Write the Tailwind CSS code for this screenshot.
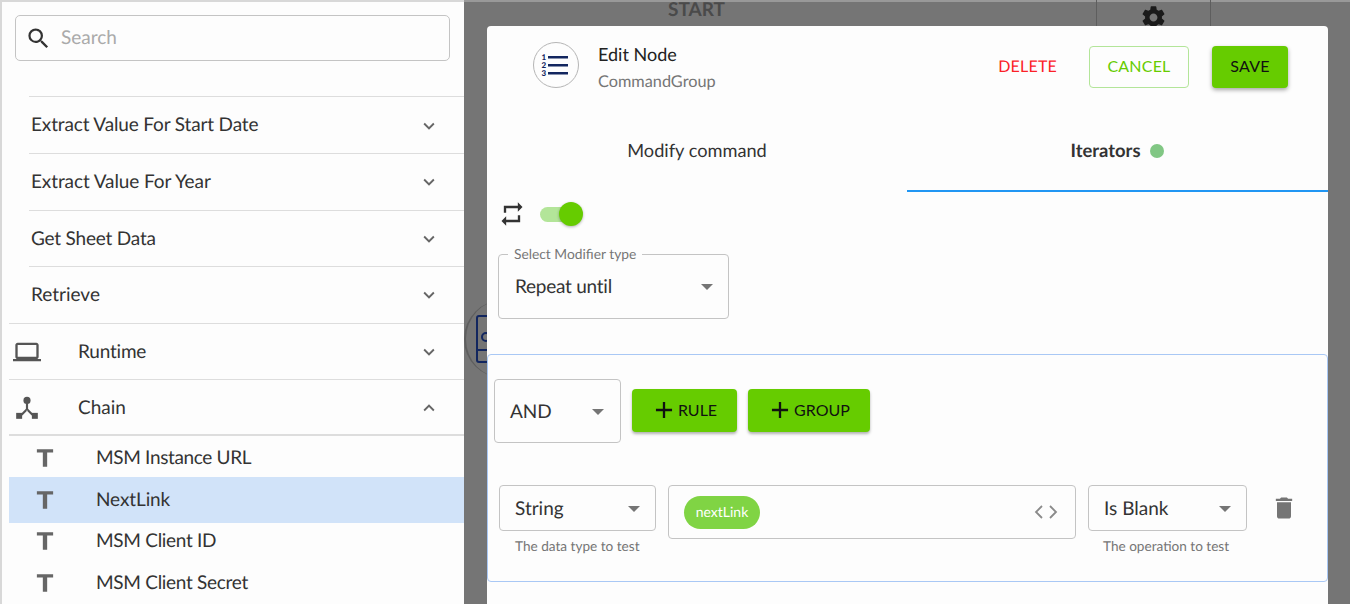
<!DOCTYPE html>
<html lang="en">
<head>
    <meta charset="UTF-8">
    <title>Edit Node</title>
    <script src="https://cdn.jsdelivr.net/npm/@tailwindcss/browser@4"></script>
</head>
<body class="bg-[#757575] font-['Lato',sans-serif] text-[#333] [text-rendering:geometricPrecision]">
    <div class="flex w-[1350px] h-[604px] overflow-hidden">
        <!-- Sidebar -->
        <aside class="w-[464px] h-full shrink-0 bg-[#fdfdfd] border-l-2 border-t-2 border-[#d8d8d8] pl-[7px] overflow-hidden">
            <div class="ml-[6px] mt-[13px] mr-[14px] h-[46px] border border-[#c4c4c4] rounded-[5px] flex items-center pl-[9px]">
                <svg class="w-[27px] h-[27px] text-[#333]" viewBox="0 0 24 24" fill="currentColor"><path d="M15.5 14h-.79l-.28-.27A6.47 6.47 0 0 0 16 9.5 6.5 6.5 0 1 0 9.5 16c1.61 0 3.09-.59 4.23-1.57l.27.28v.79l5 4.99L20.49 19l-4.99-5zm-6 0C7.01 14 5 11.99 5 9.5S7.01 5 9.5 5 14 7.01 14 9.5 11.99 14 9.5 14z"/></svg>
                <span class="ml-[9px] text-[19px] text-[#aaa]">Search</span>
            </div>

            <!-- Tree -->
            <div class="mt-[35px]">
                <div class="ml-[20px] h-[57px] pt-[1px] border-t border-[#ddd] flex items-center justify-between pl-[2px] pr-[24px] text-[19px]">
                    <span class="tracking-[-.15px]">Extract Value For Start Date</span>
                    <svg class="w-[22px] h-[22px] text-[#666]" viewBox="0 0 24 24" fill="currentColor"><path d="M7.41 8.59 12 13.17l4.59-4.58L18 10l-6 6-6-6z"/></svg>
                </div>
                <div class="ml-[20px] h-[56.5px] pt-[1px] border-t border-[#ddd] flex items-center justify-between pl-[2px] pr-[24px] text-[19px]">
                    <span class="tracking-[-.1px]">Extract Value For Year</span>
                    <svg class="w-[22px] h-[22px] text-[#666]" viewBox="0 0 24 24" fill="currentColor"><path d="M7.41 8.59 12 13.17l4.59-4.58L18 10l-6 6-6-6z"/></svg>
                </div>
                <div class="ml-[20px] h-[56.5px] pt-[1px] border-t border-[#ddd] flex items-center justify-between pl-[2px] pr-[24px] text-[19px]">
                    <span class="tracking-[-.2px]">Get Sheet Data</span>
                    <svg class="w-[22px] h-[22px] text-[#666]" viewBox="0 0 24 24" fill="currentColor"><path d="M7.41 8.59 12 13.17l4.59-4.58L18 10l-6 6-6-6z"/></svg>
                </div>
                <div class="ml-[20px] h-[56.5px] pt-[1px] border-t border-[#ddd] flex items-center justify-between pl-[2px] pr-[24px] text-[19px]">
                    <span>Retrieve</span>
                    <svg class="w-[22px] h-[22px] text-[#666]" viewBox="0 0 24 24" fill="currentColor"><path d="M7.41 8.59 12 13.17l4.59-4.58L18 10l-6 6-6-6z"/></svg>
                </div>
                <div class="h-[56.5px] pt-[2px] border-t border-[#ddd] flex items-center pr-[24px] text-[19px]">
                    <svg class="w-[28px] h-[28px] ml-[4px] text-[#555]" viewBox="0 0 24 24" fill="currentColor"><path d="M20 18c1.1 0 1.99-.9 1.99-2L22 6c0-1.1-.9-2-2-2H4c-1.1 0-2 .9-2 2v10c0 1.100.9 2 2 2H0v2h24v-2h-4zM4 6h16v10H4V6z"/></svg>
                    <span class="ml-[37px] flex-1 tracking-[-.2px]">Runtime</span>
                    <svg class="w-[22px] h-[22px] text-[#666]" viewBox="0 0 24 24" fill="currentColor"><path d="M7.41 8.59 12 13.17l4.59-4.58L18 10l-6 6-6-6z"/></svg>
                </div>
                <div class="h-[57px] pt-[2px] border-t border-[#ddd] border-b-2 flex items-center pr-[24px] text-[19px]">
                    <svg class="w-[26px] h-[26px] ml-[5px] text-[#555]" viewBox="0 0 24 24" fill="currentColor"><circle cx="12" cy="5" r="3.300"/><rect x="11" y="7" width="2" height="7"/><path d="m11.300 12.500 1.400 1.400-5 5-1.400-1.400zM12.700 12.500l-1.400 1.400 5 5 1.400-1.400z"/><rect x="2" y="16.500" width="5.500" height="5.500"/><rect x="16.500" y="16.500" width="5.500" height="5.500"/></svg>
                    <span class="ml-[38px] flex-1">Chain</span>
                    <svg class="w-[22px] h-[22px] text-[#666]" viewBox="0 0 24 24" fill="currentColor"><path d="M12 8l-6 6 1.410 1.410L12 10.830l4.590 4.580L18 14z"/></svg>
                </div>
                <div class="h-[41px] pt-[3px] flex items-center pl-[23px] text-[19px]">
                    <svg class="w-[26px] h-[26px] text-[#666]" viewBox="0 0 24 24" fill="currentColor"><path d="M4.500 4v3h5.500V20h4V7h5.500V4z"/></svg>
                    <span class="ml-[38px] tracking-[-.35px]">MSM Instance URL</span>
                </div>
                <div class="h-[46px] -mb-[3px] bg-[#d1e3f9] flex items-center pl-[23px] text-[19px]">
                    <svg class="w-[26px] h-[26px] text-[#666]" viewBox="0 0 24 24" fill="currentColor"><path d="M4.500 4v3h5.500V20h4V7h5.500V4z"/></svg>
                    <span class="ml-[38px] tracking-[-.1px]">NextLink</span>
                </div>
                <div class="h-[41.500px] flex items-center pl-[23px] text-[19px]">
                    <svg class="w-[26px] h-[26px] text-[#666]" viewBox="0 0 24 24" fill="currentColor"><path d="M4.500 4v3h5.500V20h4V7h5.500V4z"/></svg>
                    <span class="ml-[38px] tracking-[-.3px]">MSM Client ID</span>
                </div>
                <div class="h-[41.500px] pt-[2px] flex items-center pl-[23px] text-[19px]">
                    <svg class="w-[26px] h-[26px] text-[#666]" viewBox="0 0 24 24" fill="currentColor"><path d="M4.500 4v3h5.500V20h4V7h5.500V4z"/></svg>
                    <span class="ml-[38px] tracking-[-.3px]">MSM Client Secret</span>
                </div>
            </div>
        </aside>

        <!-- Canvas behind the modal -->
        <main class="relative flex-1 h-full border-t-2 border-[#999] bg-[#757575]">
            <span class="absolute left-[204px] -top-[2px] text-[19px] leading-[20px] font-bold text-[#4a4a4a]">START</span>
            <div class="absolute left-[632px] -top-[2px] w-[115px] h-[30px] border-x border-[#5e5e5e]"></div>
            <svg class="absolute left-[676px] top-[2px] w-[27px] h-[27px] text-[#1a1a1a]" viewBox="0 0 24 24" fill="currentColor"><path d="M19.430 12.980c.04-.32.07-.64.07-.98s-.03-.66-.07-.98l2.110-1.650c.19-.15.24-.42.12-.64l-2-3.460c-.12-.22-.39-.3-.61-.22l-2.490 1c-.52-.4-1.080-.73-1.690-.98l-.38-2.650A.488.488 0 0 0 14 2h-4c-.25 0-.46.18-.49.42l-.38 2.650c-.61.25-1.170.59-1.690.98l-2.490-1c-.23-.09-.49 0-.61.22l-2 3.460c-.13.22-.07.49.12.64l2.110 1.650c-.04.32-.07.65-.07.98s.03.66.07.98l-2.110 1.650c-.19.15-.24.42-.12.64l2 3.460c.12.22.39.3.61.22l2.490-1c.52.4 1.080.73 1.690.98l.38 2.650c.03.24.24.42.49.42h4c.25 0 .46-.18.49-.42l.38-2.650c.61-.25 1.170-.59 1.690-.98l2.490 1c.23.09.49 0 .61-.22l2-3.460c.12-.22.07-.49-.12-.64l-2.110-1.650zM12 15.500c-1.930 0-3.500-1.570-3.500-3.500s1.570-3.500 3.500-3.500 3.500 1.570 3.500 3.500-1.570 3.500-3.500 3.500z"/></svg>
            <div class="absolute left-0 top-[298px] w-[40px] h-[78px] rounded-l-full border-l-2 border-[#5e5e5e]"></div>
            <div class="absolute left-[12px] top-[313px] w-[14px] h-[48px] rounded-l-[3px] border-2 border-[#12265f]">
                <div class="mt-[15px] ml-[3px] w-[10px] h-[10px] rounded-full border-2 border-[#12265f]"></div>
                <div class="mt-[7px] h-[2px] bg-[#12265f]"></div>
            </div>

            <!-- Edit Node modal -->
            <section class="absolute left-[23px] top-[24px] w-[841px] h-[600px] bg-[#fdfdfd] rounded-t-[4px]">
                <header class="h-[82px] flex items-center pl-[46px] pr-[40px]">
                    <div class="-mt-[4px] w-[46px] h-[46px] rounded-full border-[1.5px] border-[#b5b5b5] flex items-center justify-center">
                        <svg class="w-[30px] h-[30px]" viewBox="0 0 30 30" fill="#12265f"><rect x="7" y="6" width="20" height="2.500"/><rect x="7" y="14" width="20" height="2.500"/><rect x="7" y="22" width="20" height="2.500"/><text x="0.500" y="10" font-size="8" font-weight="900" font-family="Lato">1</text><text x="0.500" y="18" font-size="8" font-weight="900" font-family="Lato">2</text><text x="0.500" y="26" font-size="8" font-weight="900" font-family="Lato">3</text></svg>
                    </div>
                    <div class="ml-[19px] flex-1">
                        <div class="text-[18px] leading-[26px] text-[#222]">Edit Node</div>
                        <div class="mt-[3px] text-[16.300px] leading-[24px] text-[#757575]">CommandGroup</div>
                    </div>
                    <span class="text-[16px] text-[#fb2127] tracking-[.2px]">DELETE</span>
                    <button class="ml-[32px] w-[100px] h-[42px] pb-[3px] rounded-[4px] border border-[#b3e599] text-[16px] text-[#66cc00] tracking-[.2px]">CANCEL</button>
                    <button class="ml-[23px] w-[76px] h-[42px] pb-[3px] rounded-[4px] bg-[#66cc00] text-[16px] text-[#111] tracking-[.2px] shadow-[0_2px_4px_rgba(0,0,0,.35)]">SAVE</button>
                </header>

                <!-- Tabs -->
                <nav class="h-[84px] flex">
                    <div class="w-[420px] h-full flex items-center justify-center pt-[2px] text-[18.200px]">Modify command</div>
                    <div class="flex-1 h-full flex items-center justify-center pt-[3px] text-[18.400px] font-bold border-b-2 border-[#2196f3]">
                        Iterators
                        <span class="ml-[10px] w-[14px] h-[14px] rounded-full bg-[#81c784]"></span>
                    </div>
                </nav>

                <div class="pt-[10px] pl-[11px] pr-0">
                    <div class="flex items-center h-[24px]">
                        <svg class="w-[28px] h-[28px] text-[#333]" viewBox="0 0 24 24" fill="currentColor"><path d="M7 7h10v3l4-4-4-4v3H5v6h2V7zm10 10H7v-3l-4 4 4 4v-3h12v-6h-2v4z"/></svg>
                        <!-- Switch -->
                        <div class="relative ml-[14px] w-[32px] h-[15px] rounded-full bg-[#b3e599]">
                            <span class="absolute -right-[11px] -top-[5px] w-[24px] h-[24px] rounded-full bg-[#66cc00] shadow-[0_1px_3px_rgba(0,0,0,.3)]"></span>
                        </div>
                    </div>

                    <fieldset class="relative mt-[28px] w-[231px] h-[65px] border border-[#c4c4c4] rounded-[4px] flex items-center justify-between pl-[16px] pr-[15px]">
                        <span class="absolute left-[9px] -top-[9px] bg-[#fdfdfd] px-[6px] text-[13.800px] leading-[16px] text-[#757575]">Select Modifier type</span>
                        <span class="text-[19px] tracking-[-.25px] pt-[2px]">Repeat until</span>
                        <span class="w-0 h-0 border-x-[6px] border-t-[6px] border-x-transparent border-t-[#757575]"></span>
                    </fieldset>
                </div>

                <!-- Query builder -->
                <div class="mt-[35px] h-[228px] border border-[#a9c8f5] rounded-[4px] pt-[24px] pl-[6px]">
                    <div class="flex items-center">
                        <div class="w-[127px] h-[64px] border border-[#c4c4c4] rounded-[4px] flex items-center justify-between pl-[15px] pr-[16px] pt-[2px] text-[19px]">
                            AND
                            <span class="w-0 h-0 border-x-[6px] border-t-[6px] border-x-transparent border-t-[#757575]"></span>
                        </div>
                        <button class="ml-[11px] -mt-[2px] w-[105px] h-[43px] rounded-[4px] bg-[#66cc00] text-[16px] text-[#111] flex items-center justify-center shadow-[0_2px_3px_rgba(0,0,0,.3)]">
                            <svg class="w-[24px] h-[24px] mr-[2px]" viewBox="0 0 24 24" fill="currentColor"><path d="M19 13h-6v6h-2v-6H5v-2h6V5h2v6h6z" transform="translate(12 12) scale(1.150) translate(-12 -12)"/></svg>
                            RULE
                        </button>
                        <button class="ml-[11px] -mt-[2px] w-[122px] h-[43px] rounded-[4px] bg-[#66cc00] text-[16px] text-[#111] flex items-center justify-center shadow-[0_2px_3px_rgba(0,0,0,.3)]">
                            <svg class="w-[24px] h-[24px] mr-[2px]" viewBox="0 0 24 24" fill="currentColor"><path d="M19 13h-6v6h-2v-6H5v-2h6V5h2v6h6z" transform="translate(12 12) scale(1.150) translate(-12 -12)"/></svg>
                            GROUP
                        </button>
                    </div>

                    <div class="mt-[42px] ml-[5px] flex items-start">
                        <div class="w-[157px]">
                            <div class="h-[46px] border border-[#c4c4c4] rounded-[4px] flex items-center justify-between pl-[15px] pr-[15px] pt-[2px] text-[19px]">
                                String
                                <span class="w-0 h-0 border-x-[6px] border-t-[6px] border-x-transparent border-t-[#757575]"></span>
                            </div>
                            <p class="mt-[7px] pl-[16px] text-[13.600px] leading-[17px] text-[#757575]">The data type to test</p>
                        </div>
                        <div class="ml-[12px] w-[408px] h-[54px] border border-[#c4c4c4] rounded-[4px] flex items-center justify-between pl-[15px] pr-[17px]">
                            <span class="w-[76px] h-[33px] pb-[1px] rounded-full bg-[#80d444] text-white text-[14px] flex items-center justify-center">nextLink</span>
                            <svg class="w-[24px] h-[14px] text-[#8a8a8a]" viewBox="0 0 24 14" fill="none" stroke="currentColor" stroke-width="1.800"><path d="M8 1 2 7l6 6M16 1l6 6-6 6"/></svg>
                        </div>
                        <div class="ml-[12px] w-[159px]">
                            <div class="h-[46px] border border-[#c4c4c4] rounded-[4px] flex items-center justify-between pl-[15px] pr-[15px] pt-[2px] text-[19px]">
                                Is Blank
                                <span class="w-0 h-0 border-x-[6px] border-t-[6px] border-x-transparent border-t-[#757575]"></span>
                            </div>
                            <p class="mt-[7px] pl-[15px] text-[13.600px] leading-[17px] text-[#757575]">The operation to test</p>
                        </div>
                        <svg class="ml-[23px] mt-[9px] w-[28px] h-[28px] text-[#757575]" viewBox="0 0 24 24" fill="currentColor"><path d="M6 19c0 1.100.9 2 2 2h8c1.100 0 2-.9 2-2V7H6v12zM19 4h-3.500l-1-1h-5l-1 1H5v2h14V4z"/></svg>
                    </div>
                </div>
            </section>
        </main>
    </div>
</body>
</html>
